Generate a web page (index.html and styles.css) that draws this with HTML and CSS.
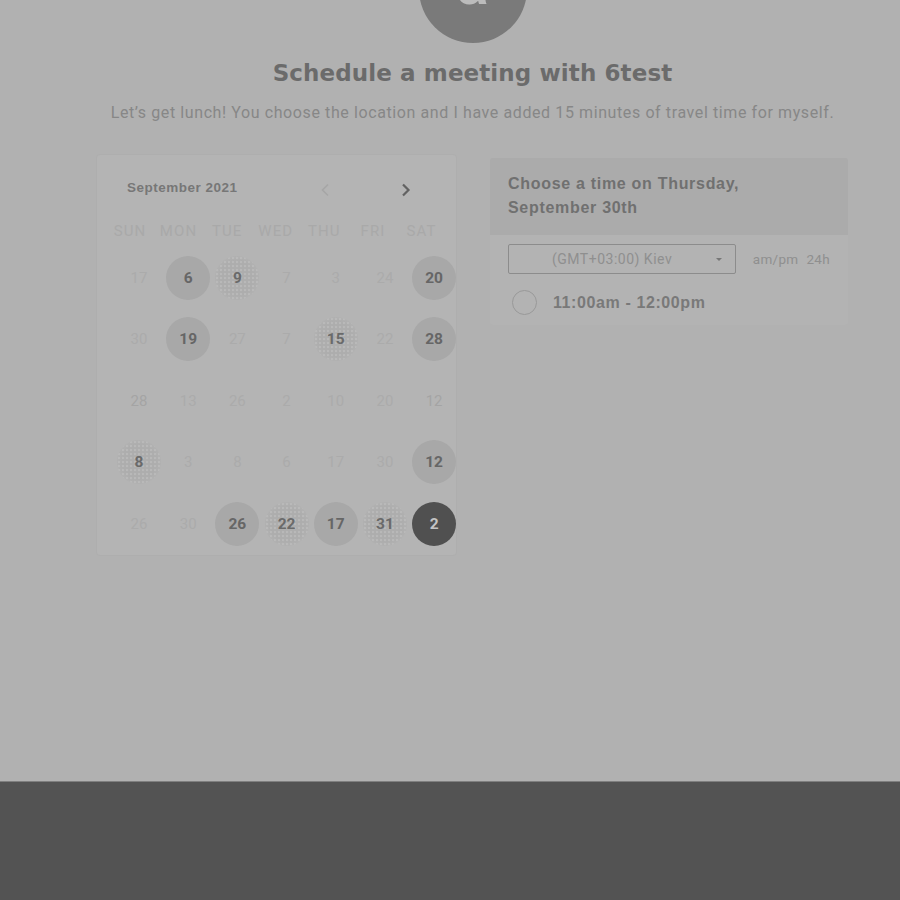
FILE: index.html
```html
<!DOCTYPE html>
<html>
<head>
<meta charset="utf-8">
<link rel="stylesheet" href="styles.css">
</head>
<body>
<div class="page">
  <div class="main">
    <div class="intro">
      <div class="avatar"><span class="avatar-letter">a</span></div>
      <h1 class="title">Schedule a meeting with 6test</h1>
      <p class="subtitle">Let’s get lunch! You choose the location and I have added 15 minutes of travel time for myself.</p>
    </div>
    <div class="columns">
      <div class="calendar">
        <div class="cal-head">
          <span class="month">September 2021</span>
          <span class="nav">
            <svg class="arrow prev" width="10" height="14" viewBox="0 0 10 14"><path d="M8 1.5 L2.5 7 L8 12.5" fill="none" stroke="currentColor" stroke-width="1.6"/></svg>
            <svg class="arrow next" width="10" height="14" viewBox="0 0 10 14"><path d="M2 1.5 L7.5 7 L2 12.5" fill="none" stroke="currentColor" stroke-width="2.2"/></svg>
          </span>
        </div>
        <div class="weekdays">
          <span>SUN</span><span>MON</span><span>TUE</span><span>WED</span><span>THU</span><span>FRI</span><span>SAT</span>
        </div>
        <div class="days">
          <span class="d">17</span><span class="d av">6</span><span class="d pt">9</span><span class="d">7</span><span class="d">3</span><span class="d">24</span><span class="d av">20</span>
          <span class="d">30</span><span class="d av">19</span><span class="d">27</span><span class="d">7</span><span class="d pt">15</span><span class="d">22</span><span class="d av">28</span>
          <span class="d mid">28</span><span class="d">13</span><span class="d">26</span><span class="d">2</span><span class="d">10</span><span class="d">20</span><span class="d mid">12</span>
          <span class="d pt">8</span><span class="d">3</span><span class="d">8</span><span class="d">6</span><span class="d">17</span><span class="d">30</span><span class="d av">12</span>
          <span class="d">26</span><span class="d">30</span><span class="d av">26</span><span class="d pt">22</span><span class="d av">17</span><span class="d pt">31</span><span class="d sel">2</span>
        </div>
      </div>
      <div class="times">
        <div class="times-head">Choose a time on Thursday, September 30th</div>
        <div class="times-body">
          <div class="tz-row">
            <div class="select"><span class="select-text">(GMT+03:00) Kiev</span><span class="caret"></span></div>
            <div class="fmt"><span>am/pm</span><span>24h</span></div>
          </div>
          <div class="slot"><span class="radio"></span><span class="slot-text">11:00am - 12:00pm</span></div>
        </div>
      </div>
    </div>
  </div>
  <div class="footer"></div>
</div>
</body>
</html>
```
FILE: styles.css
```css
* { box-sizing: border-box; }
html, body { margin: 0; padding: 0; }
body {
  background: #b1b1b1;
  font-family: Roboto, "Liberation Sans", Arial, sans-serif;
  overflow: hidden;
}
.page { width: 900px; height: 900px; display: flex; flex-direction: column; }
.main { height: 781px; padding-left: 97px; }
.intro { width: 751px; display: flex; flex-direction: column; align-items: center; }
.avatar {
  width: 108px; height: 108px; border-radius: 50%;
  background: #7a7a7a; margin-top: -65px;
  display: flex; justify-content: center; align-items: center;
}
.avatar-letter {
  color: #bcbcbc; font-family: Roboto, sans-serif; font-size: 62px; font-weight: 500;
  line-height: 1; margin-top: -12px;
}
.title {
  margin: 16px 0 0; font-family: "DejaVu Sans", "Liberation Sans", sans-serif;
  font-weight: 700; font-size: 23px; letter-spacing: 0.1px; line-height: 28px; color: #6b6b6b;
}
.subtitle {
  margin: 14px 0 0; font-size: 16px; letter-spacing: 0.6px; line-height: 24px; color: #878787; white-space: nowrap;
}
.columns { display: flex; gap: 34px; margin-top: 30px; align-items: flex-start; }
.calendar {
  width: 359px; height: 400px; background: #b4b4b4;
  border-radius: 3px; box-shadow: 0 0 2px rgba(0,0,0,0.06);
  padding: 20px 0 0 0;
}
.cal-head { display: flex; align-items: center; height: 24px; padding-left: 30px; }
.month {
  font-family: "Liberation Sans", Arial, sans-serif; font-weight: 700; font-size: 13.5px;
  letter-spacing: 0.5px; color: #777;
}
.nav { display: flex; align-items: center; margin-left: 82px; margin-top: 6px; }
.arrow.prev { color: #a6a6a6; }
.arrow.next { color: #626262; margin-left: 71px; }
.weekdays {
  display: grid; grid-template-columns: repeat(7, 48.6px);
  margin: 20px 0 0 8.7px; height: 24px; align-items: center;
}
.weekdays span { text-align: center; font-size: 15px; color: #a9a9a9; letter-spacing: 1.1px; }
.days {
  display: grid; grid-template-columns: repeat(7, 49.2px); grid-auto-rows: 61.5px;
  margin: 4px 0 0 17.4px; align-items: center; justify-items: center;
}
.d {
  width: 44px; height: 44px; border-radius: 50%;
  display: flex; align-items: center; justify-content: center;
  font-size: 15px; color: #ababab;
}
.d.mid { color: #a4a4a4; }
.d.av { background: #a8a8a8; color: #666; font-weight: 700; font-size: 15.5px; }
.d.pt {
  color: #6a6a6a; font-weight: 700; font-size: 15.5px;
  background:
    radial-gradient(circle, rgba(192,192,192,0.6) 1px, transparent 1.6px) 0 0 / 4px 4px,
    radial-gradient(circle, #adadad 55%, #b1b1b1 72%);
}
.d.sel { background: #505050; color: #c4c4c4; font-weight: 700; font-size: 15.5px; }
.times { width: 358px; margin-top: 3px; border-radius: 3px; overflow: hidden; }
.times-head {
  background: #ababab; height: 77px; padding: 14px 80px 0 18px;
  font-family: "Liberation Sans", Arial, sans-serif; font-weight: 700; font-size: 16px;
  letter-spacing: 0.7px; line-height: 24px; color: #707070;
}
.times-body { background: #b3b3b3; padding: 9px 18px 0; height: 90px; }
.tz-row { display: flex; align-items: center; }
.select {
  width: 229px; height: 30px; border: 1px solid #8c8c8c; border-radius: 2px;
  display: flex; align-items: center; position: relative; padding-left: 43px;
}
.select-text { font-size: 14px; letter-spacing: 0.5px; color: #8f8f8f; }
.caret {
  position: absolute; right: 13px; top: 13px;
  width: 0; height: 0; border-left: 3.5px solid transparent; border-right: 3.5px solid transparent;
  border-top: 3.5px solid #777;
}
.fmt { display: flex; gap: 8px; margin-left: 17px; font-size: 13.5px; letter-spacing: 0.3px; color: #8f8f8f; }
.slot { display: flex; align-items: center; margin-top: 16px; padding-left: 4px; }
.radio { width: 25px; height: 25px; border-radius: 50%; border: 1px solid #999; }
.slot-text {
  margin-left: 16px; font-family: "Liberation Sans", Arial, sans-serif;
  font-weight: 700; font-size: 16px; letter-spacing: 0.6px; color: #797979;
}
.footer { height: 119px; background: #535353; border-top: 1px solid #7f7f7f; }
```
